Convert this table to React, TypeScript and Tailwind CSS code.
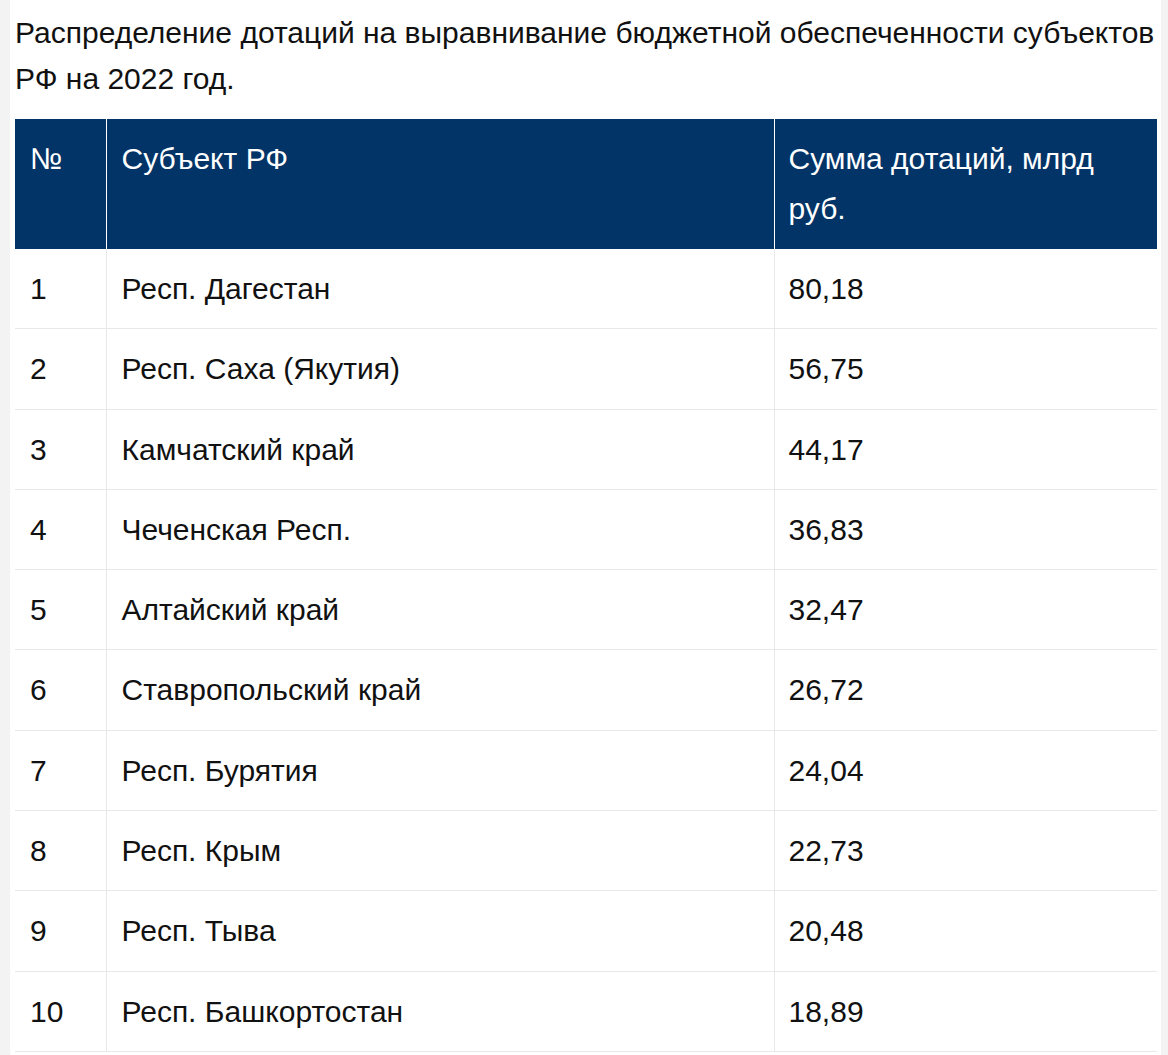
const rows: [string, string, string][] = [
  ['1', 'Респ. Дагестан', '80,18'],
  ['2', 'Респ. Саха (Якутия)', '56,75'],
  ['3', 'Камчатский край', '44,17'],
  ['4', 'Чеченская Респ.', '36,83'],
  ['5', 'Алтайский край', '32,47'],
  ['6', 'Ставропольский край', '26,72'],
  ['7', 'Респ. Бурятия', '24,04'],
  ['8', 'Респ. Крым', '22,73'],
  ['9', 'Респ. Тыва', '20,48'],
  ['10', 'Респ. Башкортостан', '18,89'],
]

export default function App() {
  return (
    <div className="flex min-h-screen bg-[#f3f3f3] pl-[10px] pr-[7px] font-['Liberation_Sans',Arial,sans-serif] text-[#111]">
      <div className="flex-1 bg-white pl-[5px] pr-[4px] pt-[10px]">
        <p className="mb-[17px] text-[30px] leading-[46px]">
          Распределение дотаций на выравнивание бюджетной обеспеченности субъектов РФ на 2022 год.
        </p>
        <table className="w-full border-collapse text-[30px] leading-[50px]">
          <thead>
            <tr className="bg-[#023467] text-white">
              <th className="w-[91px] border-r border-white px-[15px] py-[15px] text-left align-top font-normal">№</th>
              <th className="w-[668px] border-r border-white px-[15px] py-[15px] text-left align-top font-normal">Субъект РФ</th>
              <th className="px-[14px] py-[15px] text-left align-top font-normal">Сумма дотаций, млрд руб.</th>
            </tr>
          </thead>
          <tbody>
            {rows.map(([n, name, sum]) => (
              <tr key={n} className="border-b border-[#e8e8e8]">
                <td className="border-r border-[#e8e8e8] px-[15px] pb-[14.3px] pt-[15px]">{n}</td>
                <td className="border-r border-[#e8e8e8] px-[15px] pb-[14.3px] pt-[15px]">{name}</td>
                <td className="px-[14px] pb-[14.3px] pt-[15px]">{sum}</td>
              </tr>
            ))}
          </tbody>
        </table>
      </div>
    </div>
  )
}
